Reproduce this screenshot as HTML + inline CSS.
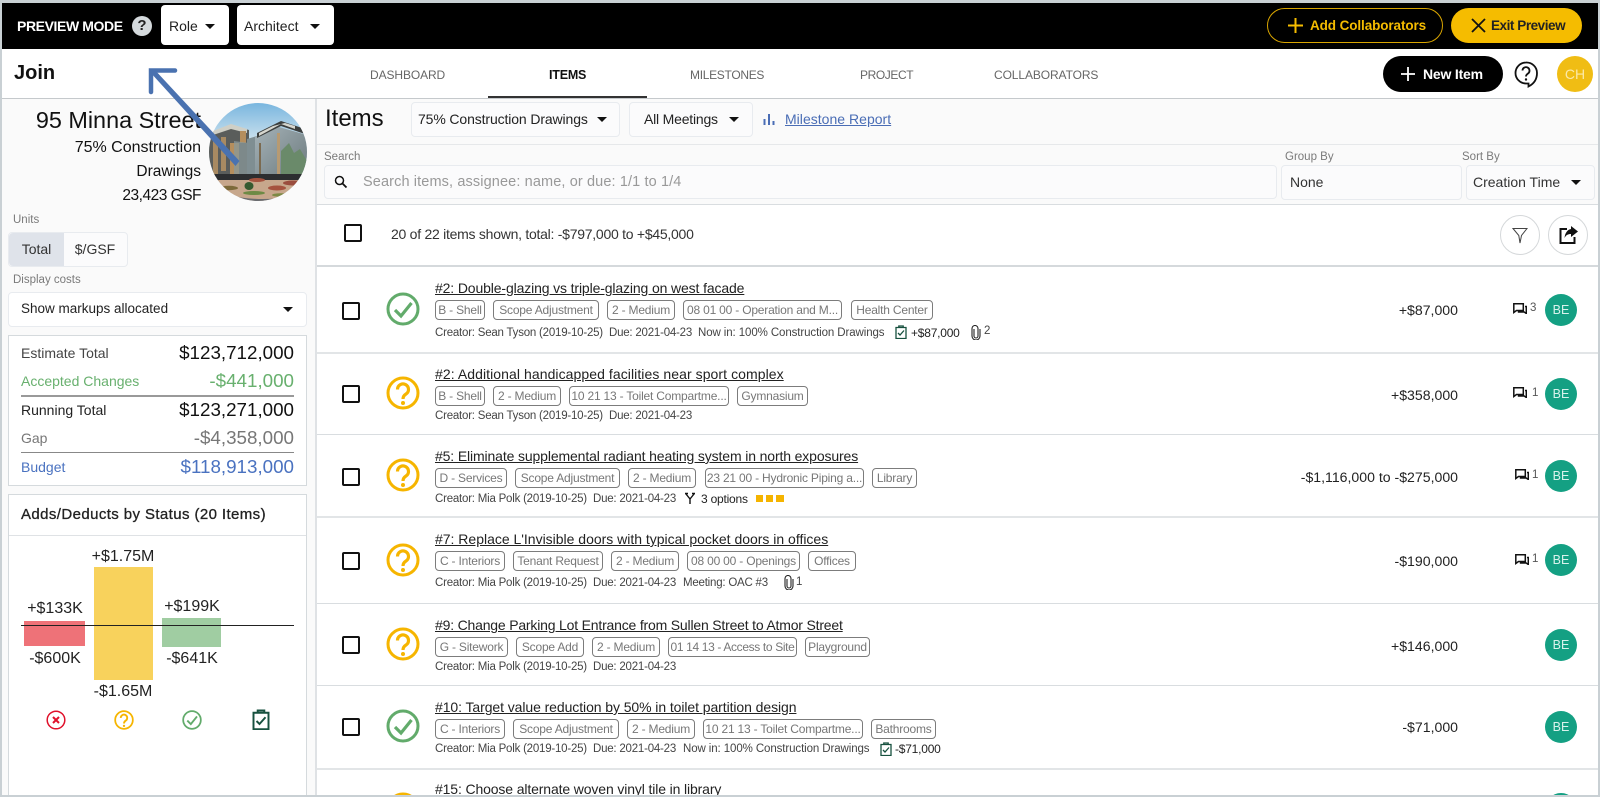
<!DOCTYPE html>
<html lang="en"><head><meta charset="utf-8"><title>Items</title>
<style>
html,body{margin:0;padding:0;background:#fff}
#p{position:relative;width:1600px;height:797px;overflow:hidden;background:#fff;font-family:"Liberation Sans",sans-serif;color:#111}
#p div,#p span.a,#p svg.a{position:absolute}
.t{white-space:nowrap;line-height:20px;height:20px}
.r{text-align:right}.c{text-align:center}
.box{box-sizing:border-box;background:#fbfbfc;border:1px solid #e8ebef;border-radius:4px}
.lbl{font-size:11.5px;color:#7a7a7a}
.nav{font-size:12px;color:#666;top:65px;letter-spacing:-.1px}
.cost{left:1151px;width:307px;text-align:right;font-size:14.1px;color:#222}
.be{left:1545px;width:32px;height:32px;border-radius:50%;background:#14a083;color:#d9f2ec;font-size:12.5px;line-height:32px;text-align:center}
.cb{left:342px;width:18px;height:18px;box-sizing:border-box;border:2px solid #111;border-radius:2px;background:#fff}
.ttl{left:435px;font-size:14px;text-decoration:underline;color:#222;letter-spacing:-.13px}
.chip{box-sizing:border-box;height:20px;border:1px solid #7c7c7c;border-radius:4px;color:#777;font-size:12px;line-height:18px;text-align:center;white-space:nowrap;overflow:hidden;letter-spacing:-.2px}
.m{font-size:11.5px;color:#444;letter-spacing:-.22px}
.hl{left:0;height:1px;background:#d9dde0}
.ci{font-size:11.5px;color:#555}
.s{font-size:18.8px}
.sl{font-size:14px;left:21px}
.cl{font-size:16px;text-align:center;width:90px;color:#222}
</style></head><body><div id="p">
<svg width="0" height="0" style="position:absolute"><defs>
<symbol id="ok" viewBox="0 0 34 34"><circle cx="17" cy="17" r="15" fill="none" stroke="#62ab6b" stroke-width="3"/><path d="M9 18l6 6L25.500 11" fill="none" stroke="#62ab6b" stroke-width="3.200"/></symbol>
<symbol id="q" viewBox="0 0 34 34"><circle cx="17" cy="17" r="15" fill="none" stroke="#f6b500" stroke-width="3"/><path d="M11.500 13.500a5.500 5.500 0 1 1 8.500 4.500c-2 1.300-3 2.500-3 5" fill="none" stroke="#f6b500" stroke-width="3.200"/><circle cx="17" cy="27" r="2" fill="#f6b500"/></symbol>
<symbol id="cl" viewBox="0 0 12 14"><path d="M1 2.500h10v11H1zM3.800 2.500V1h4.400v1.500" fill="none" stroke="#17513f" stroke-width="1.300"/><path d="M3 8l2 2 4-4.500" fill="none" stroke="#17513f" stroke-width="1.300"/></symbol>
<symbol id="cm" viewBox="0 0 14 11"><path d="M.8.800h9.500v6.700H3.500L.8 9.500zM12 3.500h1.300v7L11.200 9H4.800" fill="none" stroke="#111" stroke-width="1.500"/></symbol>
<symbol id="pc" viewBox="0 0 10 15"><path d="M3 4v7a2 2 0 0 0 4 0V3.500a3 3 0 0 0-6 0V11a4 4 0 0 0 8 0V4" fill="none" stroke="#222" stroke-width="1.100"/></symbol>
</defs></svg>

<!-- frame -->
<div style="left:0;top:0;width:1600px;height:3px;background:#c9d0d4"></div>
<div style="left:0;top:0;width:2px;height:797px;background:#c9d0d4;z-index:9"></div>
<div style="left:1598px;top:0;width:2px;height:797px;background:#c9d0d4;z-index:9"></div>
<div style="left:0;top:795px;width:1600px;height:2px;background:#c9d0d4;z-index:9"></div>

<!-- preview bar -->
<div style="left:2px;top:3px;width:1596px;height:46px;background:#000"></div>
<div class="t" style="left:17px;top:16px;color:#fff;font-weight:700;font-size:14px;letter-spacing:-.4px">PREVIEW MODE</div>
<div style="left:132px;top:16px;width:20px;height:20px;border-radius:50%;background:#d5dadd;color:#222;font-weight:700;font-size:15px;line-height:20px;text-align:center">?</div>
<div style="left:161px;top:5px;width:68px;height:40px;background:#fff;border-radius:4px"></div>
<div class="t" style="left:169px;top:16px;font-size:14px;color:#222">Role</div>
<div style="left:205px;top:24px;border:5px solid transparent;border-top:5px solid #111;border-bottom:0;border-left-width:5px"></div>
<div style="left:237px;top:5px;width:97px;height:40px;background:#fff;border-radius:4px"></div>
<div class="t" style="left:244px;top:16px;font-size:14px;color:#222">Architect</div>
<div style="left:310px;top:24px;border:5px solid transparent;border-top:5px solid #111;border-bottom:0"></div>
<div style="left:1267px;top:8px;width:176px;height:35px;box-sizing:border-box;border:1.500px solid #d9a500;border-radius:18px"></div>
<svg class="a" style="left:1287px;top:17px" width="17" height="17"><path d="M8.500 1v15M1 8.500h15" stroke="#f5bc00" stroke-width="2"/></svg>
<div class="t" style="left:1310px;top:16px;color:#f5bc00;font-weight:700;font-size:13.5px;letter-spacing:-.1px">Add Collaborators</div>
<div style="left:1451px;top:8px;width:131px;height:35px;background:#f5bc00;border-radius:18px"></div>
<svg class="a" style="left:1471px;top:18px" width="15" height="15"><path d="M1 1l13 13M14 1L1 14" stroke="#111" stroke-width="1.800"/></svg>
<div class="t" style="left:1491px;top:16px;color:#222;font-weight:700;font-size:13.5px;letter-spacing:-.45px">Exit Preview</div>

<!-- nav -->
<div class="t" style="left:14px;top:63px;font-size:20px;font-weight:700;color:#111">Join</div>
<div class="t nav" style="left:370px">DASHBOARD</div>
<div class="t nav" style="left:549px;color:#111;font-weight:700;font-size:12.5px;letter-spacing:-.2px">ITEMS</div>
<div style="left:488px;top:96px;width:159px;height:2px;background:#333"></div>
<div class="t nav" style="left:690px;letter-spacing:-.3px">MILESTONES</div>
<div class="t nav" style="left:860px;letter-spacing:-.4px">PROJECT</div>
<div class="t nav" style="left:994px">COLLABORATORS</div>
<div style="left:1383px;top:56px;width:120px;height:36px;background:#000;border-radius:18px"></div>
<svg class="a" style="left:1400px;top:66px" width="16" height="16"><path d="M8 1v14M1 8h14" stroke="#fff" stroke-width="1.800"/></svg>
<div class="t" style="left:1423px;top:64px;color:#fff;font-weight:700;font-size:14px;letter-spacing:-.2px">New Item</div>
<svg class="a" style="left:1514px;top:61px" width="24" height="27" viewBox="0 0 24 27"><path d="M12 1.500a10.500 10.500 0 1 0 0 21h2.500v3c4-2 8.500-6 8.500-13.500A10.500 10.500 0 0 0 12 1.500z" fill="#fff" stroke="#111" stroke-width="1.800"/><path d="M8.500 9.500a3.500 3.500 0 1 1 5.500 3c-1.300.9-2 1.500-2 3" fill="none" stroke="#111" stroke-width="1.800"/><circle cx="12" cy="18.500" r="1.200" fill="#111"/></svg>
<div style="left:1557px;top:56px;width:36px;height:36px;border-radius:50%;background:#f0bd14;color:#fbe9a8;font-size:14px;line-height:36px;text-align:center">CH</div>
<div class="hl" style="top:98px;width:1600px;background:#c5c9cc"></div>

<!-- left panel -->
<div style="left:2px;top:99px;width:314px;height:698px;background:#fafafa"></div>
<div style="left:315px;top:99px;width:2px;height:698px;background:#dfe2e5"></div>
<div class="t r" style="left:2px;width:199px;top:110px;font-size:23.400px;color:#111">95 Minna Street</div>
<div class="t r" style="left:2px;width:199px;top:138px;font-size:16px;color:#111">75% Construction</div>
<div class="t r" style="left:2px;width:199px;top:162px;font-size:15.500px;color:#111">Drawings</div>
<div class="t r" style="left:2px;width:199px;top:186px;font-size:15.500px;letter-spacing:-.5px;color:#111">23,423 GSF</div>
<svg class="a" style="left:209px;top:103px" width="98" height="98" viewBox="0 0 98 98">
<defs><clipPath id="cc"><circle cx="49" cy="49" r="49"/></clipPath><linearGradient id="sk" x1="0" y1="0" x2="0" y2="1"><stop offset="0" stop-color="#79b6df"/><stop offset=".4" stop-color="#cfe3ee"/></linearGradient><linearGradient id="gl" x1="0" y1="0" x2="1" y2="1"><stop offset="0" stop-color="#a6b3b8"/><stop offset="1" stop-color="#6a787c"/></linearGradient></defs>
<g clip-path="url(#cc)">
<rect width="98" height="98" fill="url(#sk)"/>
<path d="M0 30L22 22 40 27V74H0z" fill="#5a5d5b"/>
<path d="M4 28L22 21 38 26V30L22 26 4 32z" fill="#cfcfc6"/>
<path d="M4 36h5v36H4z" fill="#a88a62"/><path d="M12 34h5v34h-5z" fill="#a88a62"/><path d="M21 40h9v32h-9z" fill="#b58e5d"/><path d="M31 28h6v12h-6z" fill="#b58e5d"/>
<path d="M25 38L40 40V72H25z" fill="#8a989a" opacity=".75"/>
<path d="M38 36L48 33V74H38z" fill="#7f8e92"/>
<path d="M46 34L70 24 98 32V76H46z" fill="url(#gl)"/>
<path d="M48 30L72 18 96 26 96 31 72 23 48 35z" fill="#3c3f3e"/>
<path d="M50 30l14-7 12-3 10 3v3L72 21 50 33z" fill="#d6d6ce"/>
<path d="M68 30h3v44h-3z" fill="#b79a72"/><path d="M50 40h2v32h-2z" fill="#7b6a50"/>
<path d="M72 48l8-8 5 10 6-4 7 12v20H72z" fill="#6a8a6a"/>
<rect x="0" y="71" width="98" height="7" fill="#2c2e30"/>
<rect x="0" y="77" width="98" height="21" fill="#c7a78c"/>
<ellipse cx="40" cy="83" rx="4.500" ry="4" fill="#355a30"/><ellipse cx="20" cy="85" rx="9" ry="2.200" fill="#7d6a3a"/><ellipse cx="45" cy="90" rx="11" ry="2" fill="#6d8a45"/><ellipse cx="48" cy="77" rx="8" ry="2" fill="#a5533f"/><ellipse cx="68" cy="85" rx="9" ry="2.500" fill="#a5533f"/><ellipse cx="84" cy="80" rx="10" ry="2.500" fill="#9a4d3e"/><ellipse cx="72" cy="92" rx="9" ry="1.800" fill="#7d8a45"/>
<path d="M20 92c20 5 40 5 60 2v6H20z" fill="#6a6c70"/>
</g></svg>

<div class="t lbl" style="left:13px;top:210px">Units</div>
<div class="box" style="left:8px;top:232px;width:120px;height:35px"></div>
<div style="left:9px;top:233px;width:55px;height:33px;background:#dfe3ea;border-radius:4px 0 0 4px"></div>
<div class="t c" style="left:9px;width:55px;top:239px;font-size:14px;color:#333">Total</div>
<div class="t c" style="left:64px;width:62px;top:239px;font-size:14px;color:#333">$/GSF</div>
<div class="t lbl" style="left:13px;top:270px">Display costs</div>
<div class="box" style="left:8px;top:292px;width:299px;height:35px;background:#fff"></div>
<div class="t" style="left:21px;top:299px;font-size:13.500px;color:#222">Show markups allocated</div>
<div style="left:283px;top:307px;border:5px solid transparent;border-top:5px solid #111;border-bottom:0"></div>

<div style="left:8px;top:335px;width:299px;height:151px;box-sizing:border-box;background:#fff;border:1px solid #d5dadd"></div>
<div class="t sl" style="top:343px;color:#444">Estimate Total</div>
<div class="t r s" style="left:100px;width:194px;top:343px;color:#111">$123,712,000</div>
<div class="t sl" style="top:371px;color:#68b06e">Accepted Changes</div>
<div class="t r s" style="left:100px;width:194px;top:371px;color:#68b06e">-$441,000</div>
<div style="left:21px;top:395px;width:273px;height:2px;background:#999"></div>
<div class="t sl" style="top:400px;color:#222">Running Total</div>
<div class="t r s" style="left:100px;width:194px;top:400px;color:#111">$123,271,000</div>
<div class="t sl" style="top:428px;color:#777">Gap</div>
<div class="t r s" style="left:100px;width:194px;top:428px;color:#777">-$4,358,000</div>
<div style="left:21px;top:452px;width:273px;height:1px;background:#888"></div>
<div class="t sl" style="top:457px;color:#4a72c0">Budget</div>
<div class="t r s" style="left:100px;width:194px;top:457px;color:#4a72c0">$118,913,000</div>

<div style="left:8px;top:494px;width:299px;height:303px;box-sizing:border-box;background:#fff;border:1px solid #d5dadd"></div>
<div class="t" style="left:21px;top:505px;font-size:15px;letter-spacing:.4px;color:#222;font-weight:400;-webkit-text-stroke:.3px #222">Adds/Deducts by Status (20 Items)</div>
<div style="left:9px;top:535px;width:297px;height:1px;background:#dfe2e5"></div>
<div style="left:24px;top:621px;width:61px;height:25px;background:#ee7278"></div>
<div style="left:94px;top:567px;width:59px;height:113px;background:#f8d25c"></div>
<div style="left:162px;top:618px;width:59px;height:29px;background:#a0cda2"></div>
<div style="left:21px;top:625px;width:273px;height:1px;background:#222"></div>
<div class="t cl" style="left:10px;top:599px">+$133K</div>
<div class="t cl" style="left:10px;top:649px">-$600K</div>
<div class="t cl" style="left:78px;top:547px">+$1.75M</div>
<div class="t cl" style="left:78px;top:682px">-$1.65M</div>
<div class="t cl" style="left:147px;top:597px">+$199K</div>
<div class="t cl" style="left:147px;top:649px">-$641K</div>
<svg class="a" style="left:46px;top:710px" width="20" height="20" viewBox="0 0 20 20"><circle cx="10" cy="10" r="8.800" fill="none" stroke="#e0112b" stroke-width="1.500"/><path d="M7 7l6 6M13 7l-6 6" stroke="#e0112b" stroke-width="2"/></svg>
<svg class="a" style="left:114px;top:710px" width="20" height="20"><use href="#q"/></svg>
<svg class="a" style="left:182px;top:710px" width="20" height="20"><use href="#ok"/></svg>
<svg class="a" style="left:252px;top:709px" width="18" height="21"><use href="#cl"/></svg>

<!-- main header -->
<div style="left:317px;top:99px;width:1281px;height:105px;background:#fafafa"></div>
<div class="t" style="left:325px;top:109px;font-size:24px;color:#111">Items</div>
<div class="box" style="left:411px;top:102px;width:209px;height:35px"></div>
<div class="t" style="left:418px;top:109px;font-size:14px;color:#222;letter-spacing:-.12px">75% Construction Drawings</div>
<div style="left:597px;top:117px;border:5px solid transparent;border-top:5px solid #111;border-bottom:0"></div>
<div class="box" style="left:629px;top:102px;width:124px;height:35px"></div>
<div class="t" style="left:644px;top:109px;font-size:14px;color:#222;letter-spacing:-.2px">All Meetings</div>
<div style="left:729px;top:117px;border:5px solid transparent;border-top:5px solid #111;border-bottom:0"></div>
<svg class="a" style="left:763px;top:113px" width="13" height="12"><path d="M1.500 6v6M6 1v11M10.500 8v4" stroke="#4a6db5" stroke-width="2"/></svg>
<div class="t" style="left:785px;top:109px;font-size:14px;color:#4a6db5;text-decoration:underline;letter-spacing:.02px">Milestone Report</div>
<div class="hl" style="left:317px;top:144px;width:1281px;background:#e6e8ea"></div>
<div class="t lbl" style="left:324px;top:147px">Search</div>
<div class="box" style="left:324px;top:165px;width:953px;height:34px"></div>
<svg class="a" style="left:334px;top:175px" width="14" height="14"><circle cx="5.500" cy="5.500" r="4" fill="none" stroke="#111" stroke-width="1.500"/><path d="M8.500 8.500l4 4" stroke="#111" stroke-width="1.800"/></svg>
<div class="t" style="left:363px;top:172px;font-size:14.500px;color:#999;letter-spacing:.12px">Search items, assignee: name, or due: 1/1 to 1/4</div>
<div class="t lbl" style="left:1285px;top:147px">Group By</div>
<div class="box" style="left:1281px;top:165px;width:181px;height:35px"></div>
<div class="t" style="left:1290px;top:172px;font-size:14px;color:#333">None</div>
<div class="t lbl" style="left:1462px;top:147px">Sort By</div>
<div class="box" style="left:1466px;top:165px;width:129px;height:35px"></div>
<div class="t" style="left:1473px;top:172px;font-size:14px;color:#333">Creation Time</div>
<div style="left:1571px;top:180px;border:5px solid transparent;border-top:5px solid #111;border-bottom:0"></div>
<div class="hl" style="left:317px;top:204px;width:1281px"></div>

<div class="cb" style="left:344px;top:224px"></div>
<div class="t" style="left:391px;top:224px;font-size:14px;color:#333;letter-spacing:-.26px">20 of 22 items shown, total: -$797,000 to +$45,000</div>
<div style="left:1500px;top:215px;width:40px;height:40px;box-sizing:border-box;border:1px solid #d5d8da;border-radius:50%"></div>
<svg class="a" style="left:1512px;top:227px" width="16" height="17"><path d="M1 1.500h14L9.500 8.500 8 16 6.800 8.500z" fill="none" stroke="#444" stroke-width="1"/></svg>
<div style="left:1548px;top:215px;width:40px;height:40px;box-sizing:border-box;border:1px solid #d5d8da;border-radius:50%"></div>
<svg class="a" style="left:1559px;top:226px" width="20" height="18"><path d="M8 3H1.500v14h14v-6" fill="none" stroke="#111" stroke-width="2"/><path d="M12 0l7 5.500L12 11V8c-3 0-5 1-6.500 4C6 7 8.500 3.500 12 3z" fill="#111"/></svg>
<div style="left:317px;top:265px;width:1281px;height:2px;background:#d5d9dc"></div>

<!-- row 1 -->
<div class="cb" style="top:302px"></div>
<svg class="a" style="left:386px;top:292px" width="34" height="34"><use href="#ok"/></svg>
<div class="t ttl" style="top:278px">#2: Double-glazing vs triple-glazing on west facade</div>
<div class="chip" style="top:300px;left:435px;width:50px">B - Shell</div>
<div class="chip" style="top:300px;left:493px;width:106px">Scope Adjustment</div>
<div class="chip" style="top:300px;left:607px;width:68px">2 - Medium</div>
<div class="chip" style="top:300px;left:683px;width:159px">08 01 00 - Operation and M...</div>
<div class="chip" style="top:300px;left:851px;width:82px">Health Center</div>
<div class="t m" style="left:435px;top:323px">Creator: Sean Tyson (2019-10-25)</div>
<div class="t m" style="left:609px;top:323px">Due: 2021-04-23</div>
<div class="t m" style="left:698px;top:323px;letter-spacing:-.1px">Now in: 100% Construction Drawings</div>
<svg class="a" style="left:895px;top:325px" width="12" height="14"><use href="#cl"/></svg>
<div class="t m" style="left:911px;top:323px;color:#222;font-size:12px">+$87,000</div>
<svg class="a" style="left:971px;top:325px" width="10" height="15"><use href="#pc"/></svg>
<div class="t m" style="left:984px;top:321px">2</div>
<div class="t cost" style="top:300px">+$87,000</div>
<svg class="a" style="left:1513px;top:303px" width="14" height="11"><use href="#cm"/></svg>
<div class="t ci" style="left:1530px;top:298px">3</div>
<div class="be" style="top:294px">BE</div>
<div class="hl" style="left:317px;top:352px;width:1281px;height:2px;background:#e2e5e7"></div>

<!-- row 2 -->
<div class="cb" style="top:385px"></div>
<svg class="a" style="left:386px;top:376px" width="34" height="34"><use href="#q"/></svg>
<div class="t ttl" style="top:364px;letter-spacing:.07px">#2: Additional handicapped facilities near sport complex</div>
<div class="chip" style="top:386px;left:435px;width:50px">B - Shell</div>
<div class="chip" style="top:386px;left:493px;width:68px">2 - Medium</div>
<div class="chip" style="top:386px;left:569px;width:160px">10 21 13 - Toilet Compartme...</div>
<div class="chip" style="top:386px;left:737px;width:71px">Gymnasium</div>
<div class="t m" style="left:435px;top:406px">Creator: Sean Tyson (2019-10-25)</div>
<div class="t m" style="left:609px;top:406px">Due: 2021-04-23</div>
<div class="t cost" style="top:385px">+$358,000</div>
<svg class="a" style="left:1513px;top:387px" width="14" height="11"><use href="#cm"/></svg>
<div class="t ci" style="left:1532px;top:383px">1</div>
<div class="be" style="top:378px">BE</div>
<div class="hl" style="left:317px;top:434px;width:1281px"></div>

<!-- row 3 -->
<div class="cb" style="top:468px"></div>
<svg class="a" style="left:386px;top:458px" width="34" height="34"><use href="#q"/></svg>
<div class="t ttl" style="top:446px">#5: Eliminate supplemental radiant heating system in north exposures</div>
<div class="chip" style="top:468px;left:435px;width:72px">D - Services</div>
<div class="chip" style="top:468px;left:515px;width:105px">Scope Adjustment</div>
<div class="chip" style="top:468px;left:628px;width:68px">2 - Medium</div>
<div class="chip" style="top:468px;left:705px;width:159px">23 21 00 - Hydronic Piping a...</div>
<div class="chip" style="top:468px;left:872px;width:45px">Library</div>
<div class="t m" style="left:435px;top:489px">Creator: Mia Polk (2019-10-25)</div>
<div class="t m" style="left:593px;top:489px">Due: 2021-04-23</div>
<svg class="a" style="left:684px;top:492px" width="12" height="13"><path d="M6 12V7L2 2M6 7l4-5M1 1.500h3M8 1.500h3" fill="none" stroke="#111" stroke-width="1.400"/></svg>
<div class="t m" style="left:701px;top:489px;color:#222;font-size:12px">3 options</div>
<div style="left:756px;top:495px;width:7px;height:7px;background:#f5b400"></div>
<div style="left:766px;top:495px;width:7px;height:7px;background:#f5b400"></div>
<div style="left:776px;top:495px;width:8px;height:7px;background:#f5b400"></div>
<div class="t cost" style="top:467px">-$1,116,000 to -$275,000</div>
<svg class="a" style="left:1515px;top:469px" width="14" height="11"><use href="#cm"/></svg>
<div class="t ci" style="left:1532px;top:465px">1</div>
<div class="be" style="top:460px">BE</div>
<div class="hl" style="left:317px;top:516px;width:1281px;height:2px;background:#e2e5e7"></div>

<!-- row 4 -->
<div class="cb" style="top:552px"></div>
<svg class="a" style="left:386px;top:543px" width="34" height="34"><use href="#q"/></svg>
<div class="t ttl" style="top:529px;letter-spacing:-.01px">#7: Replace L'Invisible doors with typical pocket doors in offices</div>
<div class="chip" style="top:551px;left:435px;width:70px">C - Interiors</div>
<div class="chip" style="top:551px;left:513px;width:90px">Tenant Request</div>
<div class="chip" style="top:551px;left:611px;width:68px">2 - Medium</div>
<div class="chip" style="top:551px;left:687px;width:113px">08 00 00 - Openings</div>
<div class="chip" style="top:551px;left:808px;width:48px">Offices</div>
<div class="t m" style="left:435px;top:573px">Creator: Mia Polk (2019-10-25)</div>
<div class="t m" style="left:593px;top:573px">Due: 2021-04-23</div>
<div class="t m" style="left:683px;top:573px">Meeting: OAC #3</div>
<svg class="a" style="left:784px;top:575px" width="10" height="15"><use href="#pc"/></svg>
<div class="t m" style="left:796px;top:572px">1</div>
<div class="t cost" style="top:551px">-$190,000</div>
<svg class="a" style="left:1515px;top:554px" width="14" height="11"><use href="#cm"/></svg>
<div class="t ci" style="left:1532px;top:549px">1</div>
<div class="be" style="top:544px">BE</div>
<div class="hl" style="left:317px;top:603px;width:1281px"></div>

<!-- row 5 -->
<div class="cb" style="top:636px"></div>
<svg class="a" style="left:386px;top:627px" width="34" height="34"><use href="#q"/></svg>
<div class="t ttl" style="top:615px;letter-spacing:-.19px">#9: Change Parking Lot Entrance from Sullen Street to Atmor Street</div>
<div class="chip" style="top:637px;left:435px;width:73px">G - Sitework</div>
<div class="chip" style="top:637px;left:516px;width:68px">Scope Add</div>
<div class="chip" style="top:637px;left:592px;width:68px">2 - Medium</div>
<div class="chip" style="top:637px;left:668px;width:129px;letter-spacing:-.35px">01 14 13 - Access to Site</div>
<div class="chip" style="top:637px;left:805px;width:65px">Playground</div>
<div class="t m" style="left:435px;top:657px">Creator: Mia Polk (2019-10-25)</div>
<div class="t m" style="left:593px;top:657px">Due: 2021-04-23</div>
<div class="t cost" style="top:636px">+$146,000</div>
<div class="be" style="top:629px">BE</div>
<div class="hl" style="left:317px;top:685px;width:1281px"></div>

<!-- row 6 -->
<div class="cb" style="top:718px"></div>
<svg class="a" style="left:386px;top:709px" width="34" height="34"><use href="#ok"/></svg>
<div class="t ttl" style="top:697px;letter-spacing:-.08px">#10: Target value reduction by 50% in toilet partition design</div>
<div class="chip" style="top:719px;left:435px;width:70px">C - Interiors</div>
<div class="chip" style="top:719px;left:513px;width:106px">Scope Adjustment</div>
<div class="chip" style="top:719px;left:627px;width:68px">2 - Medium</div>
<div class="chip" style="top:719px;left:703px;width:160px">10 21 13 - Toilet Compartme...</div>
<div class="chip" style="top:719px;left:871px;width:65px">Bathrooms</div>
<div class="t m" style="left:435px;top:739px">Creator: Mia Polk (2019-10-25)</div>
<div class="t m" style="left:593px;top:739px">Due: 2021-04-23</div>
<div class="t m" style="left:683px;top:739px;letter-spacing:-.1px">Now in: 100% Construction Drawings</div>
<svg class="a" style="left:880px;top:742px" width="12" height="14"><use href="#cl"/></svg>
<div class="t m" style="left:895px;top:739px;color:#222;font-size:12px">-$71,000</div>
<div class="t cost" style="top:717px">-$71,000</div>
<div class="be" style="top:711px">BE</div>
<div class="hl" style="left:317px;top:768px;width:1281px;height:2px;background:#e2e5e7"></div>

<!-- row 7 -->
<svg class="a" style="left:386px;top:792px" width="34" height="34"><use href="#q"/></svg>
<div class="t ttl" style="top:779px">#15: Choose alternate woven vinyl tile in library</div>
<div class="be" style="top:793px">BE</div>

<!-- annotation arrow -->
<svg class="a" style="left:0;top:0;z-index:8" width="320" height="200"><path d="M235.500 166L150 72l3.500-3.500L239.500 161z" fill="#4a72b0"/><path d="M175 70.500H151V92" fill="none" stroke="#4a72b0" stroke-width="4.500" stroke-linecap="round"/></svg>
</div></body></html>
